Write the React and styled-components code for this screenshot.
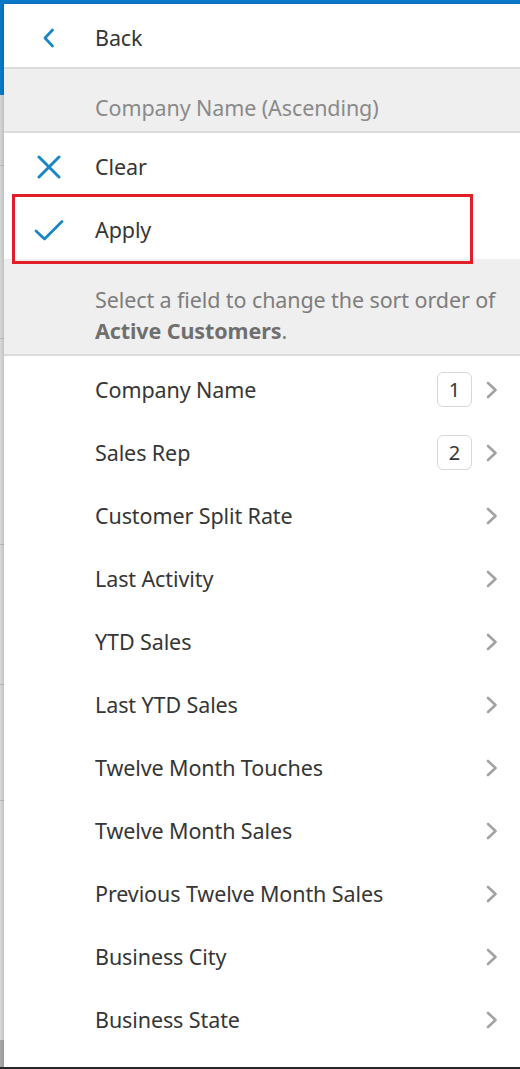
import React from "react";
import styled, { createGlobalStyle } from "styled-components";

const GlobalStyle = createGlobalStyle`
  html, body {
    margin: 0;
    padding: 0;
    background: #ffffff;
  }
  * {
    box-sizing: border-box;
  }
`;

const BLUE = "#1a86c8";
const FONT = `"Noto Sans", "Open Sans", sans-serif`;

const Screen = styled.div`
  width: 520px;
  height: 1069px;
  display: flex;
  flex-direction: column;
  overflow: hidden;
  font-family: ${FONT};
  background: #d9d9d9;
`;

const TopBar = styled.div`
  height: 4px;
  background: #0b79c9;
  flex-shrink: 0;
`;

const Body = styled.div`
  flex: 1;
  display: flex;
  min-height: 0;
`;

const Underlay = styled.div`
  width: 4px;
  flex-shrink: 0;
  background: linear-gradient(
    to bottom,
    #0b79c9 0px,
    #0b79c9 91px,
    #d4d4d4 91px,
    #d4d4d4 161px,
    #b8b8b8 161px,
    #b8b8b8 162px,
    #d6d6d6 162px,
    #d6d6d6 334px,
    #bcbcbc 334px,
    #bcbcbc 335px,
    #d8d8d8 335px,
    #d8d8d8 540px,
    #bdbdbd 540px,
    #bdbdbd 541px,
    #d8d8d8 541px,
    #d8d8d8 680px,
    #bdbdbd 680px,
    #bdbdbd 681px,
    #d8d8d8 681px,
    #d8d8d8 796px,
    #bdbdbd 796px,
    #bdbdbd 797px,
    #d8d8d8 797px,
    #d8d8d8 1036px,
    #a9a9a9 1036px
  );
`;

const Panel = styled.div`
  flex: 1;
  background: #ffffff;
  display: flex;
  flex-direction: column;
  box-shadow: -1px 0 3px rgba(0, 0, 0, 0.15);
`;

const BottomBar = styled.div`
  height: 2px;
  background: #23272a;
  flex-shrink: 0;
`;

const Row = styled.div`
  position: relative;
  height: ${(p) => (p.$divider ? "65px" : "63px")};
  padding-top: 4px;
  display: flex;
  align-items: center;
  flex-shrink: 0;
  background: #ffffff;
  border-bottom: ${(p) => (p.$divider ? "2px solid #dcdcdc" : "none")};
`;

const IconCell = styled.div`
  width: 91px;
  display: flex;
  justify-content: center;
  padding-right: 2px;
  flex-shrink: 0;
`;

const Label = styled.span`
  flex: 1;
  font-size: 21.5px;
  color: #363636;
  letter-spacing: -0.1px;
`;

const StatusBox = styled.div`
  height: 64px;
  background: #efefef;
  border-bottom: 2px solid #dcdcdc;
  display: flex;
  align-items: center;
  padding: 14px 0 0 91px;
  font-size: 21.5px;
  color: #8a8a8a;
  letter-spacing: -0.1px;
  flex-shrink: 0;
`;

const InfoBox = styled.div`
  height: 97px;
  background: #efefef;
  border-bottom: 2px solid #dcdcdc;
  padding: 25px 10px 0 91px;
  font-size: 21.5px;
  line-height: 31px;
  color: #7d7d7d;
  letter-spacing: -0.1px;
  flex-shrink: 0;

  strong {
    font-weight: 700;
    color: #6f6f6f;
  }
`;

const Highlight = styled.div`
  position: absolute;
  left: 8px;
  top: -2px;
  width: 461px;
  height: 70px;
  border: 3px solid #e21f26;
  pointer-events: none;
`;

const Badge = styled.span`
  width: 35px;
  height: 35px;
  border: 1px solid #d8d8d8;
  border-radius: 6px;
  display: flex;
  align-items: center;
  justify-content: center;
  font-size: 20px;
  color: #363636;
  margin-right: 13px;
`;

const Chevron = styled.svg`
  width: 14px;
  height: 18px;
  margin-right: 21px;
  flex-shrink: 0;
`;

const ChevronRight = () => (
  <Chevron viewBox="0 0 14 18">
    <path
      d="M3 2 L10.5 9 L3 16"
      fill="none"
      stroke="#a3a3a3"
      strokeWidth="2.6"
      strokeLinecap="round"
      strokeLinejoin="round"
    />
  </Chevron>
);

const BackIcon = () => (
  <svg width="16" height="20" viewBox="0 0 16 20">
    <path
      d="M11.5 2 L4 10 L11.5 18"
      fill="none"
      stroke={BLUE}
      strokeWidth="2.8"
      strokeLinecap="round"
      strokeLinejoin="round"
    />
  </svg>
);

const ClearIcon = () => (
  <svg width="26" height="24" viewBox="0 0 26 24">
    <path
      d="M3 2 L23 22 M23 2 L3 22"
      fill="none"
      stroke={BLUE}
      strokeWidth="3"
      strokeLinecap="round"
    />
  </svg>
);

const CheckIcon = () => (
  <svg width="30" height="24" viewBox="0 0 30 24">
    <path
      d="M2 13 L10.5 21 L28 3.5"
      fill="none"
      stroke={BLUE}
      strokeWidth="2.8"
      strokeLinecap="round"
      strokeLinejoin="round"
    />
  </svg>
);

const fields = [
  { name: "Company Name", order: 1 },
  { name: "Sales Rep", order: 2 },
  { name: "Customer Split Rate" },
  { name: "Last Activity" },
  { name: "YTD Sales" },
  { name: "Last YTD Sales" },
  { name: "Twelve Month Touches" },
  { name: "Twelve Month Sales" },
  { name: "Previous Twelve Month Sales" },
  { name: "Business City" },
  { name: "Business State" },
];

const List = styled.div`
  display: flex;
  flex-direction: column;
`;

export default function App() {
  return (
    <>
      <GlobalStyle />
      <Screen>
        <TopBar />
        <Body>
          <Underlay />
          <Panel>
            <Row $divider>
              <IconCell>
                <BackIcon />
              </IconCell>
              <Label>Back</Label>
            </Row>
            <StatusBox>Company Name (Ascending)</StatusBox>
            <Row>
              <IconCell>
                <ClearIcon />
              </IconCell>
              <Label>Clear</Label>
            </Row>
            <Row>
              <IconCell>
                <CheckIcon />
              </IconCell>
              <Label>Apply</Label>
              <Highlight />
            </Row>
            <InfoBox>
              Select a field to change the sort order of{" "}
              <strong>Active Customers</strong>.
            </InfoBox>
            <List>
              {fields.map((f) => (
                <Row key={f.name}>
                  <IconCell />
                  <Label>{f.name}</Label>
                  {f.order && <Badge>{f.order}</Badge>}
                  <ChevronRight />
                </Row>
              ))}
            </List>
          </Panel>
        </Body>
        <BottomBar />
      </Screen>
    </>
  );
}
